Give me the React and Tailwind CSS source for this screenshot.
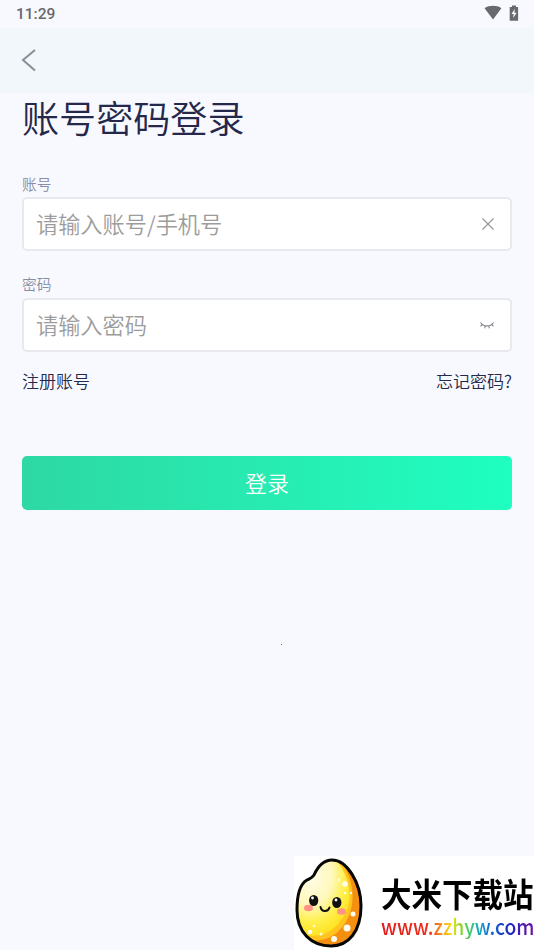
function StatusBar() {
  return (
    <div className="flex h-7 items-center justify-between pl-4 pr-[15px] text-[#68696d]">
      <span className="font-[Roboto] text-[15.5px] font-medium leading-7">11:29</span>
      <div className="flex items-center gap-[7px] pb-[3px]">
        <svg width="18" height="15" viewBox="0 0 18 15" fill="currentColor">
          <path d="M0.6 3.2C5.2 0 12.8 0 17.4 3.2L9 14.4Z" />
        </svg>
        <svg width="10" height="16" viewBox="0 0 10 16">
          <path d="M3 0.5h4v1.5h2.1v13.7H0.7V2H3Z" fill="currentColor" />
          <path d="M5.9 3.8L2.5 9h2.2l-0.6 4L7.6 7.8H5.3Z" fill="#fff" />
        </svg>
      </div>
    </div>
  )
}

function Field({ id, label, placeholder, children }) {
  return (
    <div>
      <label htmlFor={id} className="block text-[14.7px] leading-6 font-[350] text-[#898ca2]">
        {label}
      </label>
      <div className="mt-px flex h-[54px] items-center rounded-[5px] border-2 border-[#e8e9ee] bg-white pl-3 pr-4">
        <input
          id={id}
          placeholder={placeholder}
          className="mb-0.5 min-w-0 flex-1 bg-transparent text-[22.2px] leading-8 font-[350] outline-none placeholder:text-[#9c9c9c]"
        />
        {children}
      </div>
    </div>
  )
}

function RiceLogo() {
  return (
    <svg width="74" height="94" viewBox="0 0 74 94" className="shrink-0">
      <defs>
        <radialGradient id="rice" cx="0.35" cy="0.25" r="0.8">
          <stop offset="0" stopColor="#fffde8" />
          <stop offset="0.45" stopColor="#fff8bc" />
          <stop offset="0.72" stopColor="#fff04c" />
          <stop offset="1" stopColor="#ffe018" />
        </radialGradient>
        <clipPath id="grain">
          <path d="M20 19C25 8 31 4 38 4C53 4 67 27 67 50C67 76 54 90 37 90C17 90 3 76 3 54C3 40 6 28 13 24C17 22 18 22 20 19Z" />
        </clipPath>
      </defs>
      <g clipPath="url(#grain)">
        <rect width="74" height="94" fill="#f48f12" />
        <path d="M-4 0H41C58 14 64 44 53 64C43 82 26 89 6 82L-4 65Z" fill="#ffc41f" />
        <path d="M-4 0H38C55 15 61 44 50 60C40 77 24 84 6 77L-4 62Z" fill="url(#rice)" />
      </g>
      <path
        d="M20 19C25 8 31 4 38 4C53 4 67 27 67 50C67 76 54 90 37 90C17 90 3 76 3 54C3 40 6 28 13 24C17 22 18 22 20 19Z"
        fill="none"
        stroke="#070707"
        strokeWidth="3"
      />
      <g fill="#fffdf0">
        <circle cx="51" cy="28" r="2.8" />
        <circle cx="45" cy="24" r="1.2" />
        <circle cx="51" cy="37" r="1.3" />
        <circle cx="57" cy="37" r="1.2" />
        <circle cx="59" cy="58" r="2.5" />
        <circle cx="53" cy="72" r="3.5" />
        <circle cx="40" cy="83" r="3" />
        <circle cx="16" cy="76" r="2.3" />
        <circle cx="27" cy="78" r="1.5" />
        <circle cx="20" cy="70" r="1.2" />
      </g>
      <g fill="#ff9386">
        <ellipse cx="14.5" cy="52" rx="4.5" ry="3.2" />
        <ellipse cx="47.5" cy="55.5" rx="4.5" ry="3.2" />
      </g>
      <g fill="#111">
        <ellipse cx="19.7" cy="44.5" rx="4.6" ry="5.6" />
        <ellipse cx="42.8" cy="46.5" rx="4.6" ry="5.6" />
      </g>
      <g fill="#fff">
        <circle cx="18.5" cy="42" r="1.4" />
        <circle cx="42" cy="44" r="1.4" />
      </g>
      <path d="M26.5 51C27.5 56 34 56.5 35.5 51.5" fill="none" stroke="#111" strokeWidth="2" strokeLinecap="round" />
    </svg>
  )
}

function SiteBadge() {
  return (
    <div className="absolute bottom-0 right-0 flex h-[94px] w-[240px] overflow-hidden bg-white">
      <RiceLogo />
      <div className="ml-[13px] mt-[19px] w-[153px] whitespace-nowrap">
        <div className="h-9 scale-y-[1.08] text-[30.5px] leading-9 font-bold text-black">大米下载站</div>
        <div className="mt-px inline-block origin-left scale-x-[0.875] bg-[linear-gradient(90deg,#e51b1b_0%,#ee2b18_31%,#f5821f_38%,#f6e21c_46%,#6fd22c_54%,#18b8b0_62%,#1674d8_70%,#1632c4_82%,#4a18b0_92%,#6a16a8_100%)] bg-clip-text text-[22px] leading-[27px] font-medium text-transparent">
          www.zzhyw.com
        </div>
      </div>
    </div>
  )
}

export default function App() {
  return (
    <div className="relative h-[950px] w-full overflow-hidden bg-[#f8f9ff] font-['Noto_Sans_CJK_SC',sans-serif] text-[#24284a]">
      <StatusBar />
      <header className="flex h-[65px] items-center bg-[#f1f7fa] pl-[21px]">
        <button aria-label="返回" className="mb-0.5">
          <svg width="16" height="24" viewBox="0 0 16 24" fill="none" stroke="#8a8d98" strokeWidth="2">
            <path d="M14 2L2 12L14 22.5" />
          </svg>
        </button>
      </header>

      <main className="px-[22px]">
        <h1 className="h-[54px] text-[37.1px] leading-[49px] font-[350]">账号密码登录</h1>
        <div className="mt-[25px] flex flex-col gap-[22px]">
          <Field id="account" label="账号" placeholder="请输入账号/手机号">
            <svg width="12" height="12" viewBox="0 0 12 12" fill="none" stroke="#98989c" strokeWidth="1.2">
              <path d="M0.5 0.5L11.5 11.5M11.5 0.5L0.5 11.5" />
            </svg>
          </Field>
          <Field id="password" label={<span className="block pb-[3px] leading-[21px]">密码</span>} placeholder="请输入密码">
            <svg width="14" height="7" viewBox="0 0 14 7" fill="none" stroke="#85858c" strokeWidth="1.1">
              <path d="M0.5 0.5C3 5 11 5 13.5 0.5M2.3 2.5L0.5 4.3M5.2 3.8L4.6 6.3M8.8 3.8L9.4 6.3M11.7 2.5L13.5 4.3" />
            </svg>
          </Field>
        </div>

        <div className="mt-[17px] flex h-6 justify-between text-[17px] leading-6 font-[350]">
          <button>注册账号</button>
          <button>忘记密码?</button>
        </div>

        <button className="mt-[63px] block h-[54px] w-full rounded-[5px] bg-linear-to-r from-[#2dd8a3] to-[#1effc0] pb-px text-[22px] font-[350] text-white">
          登录
        </button>
      </main>

      <span className="absolute left-[281px] top-[644px] size-px bg-[#a04a5c]" />
      <SiteBadge />
    </div>
  )
}
